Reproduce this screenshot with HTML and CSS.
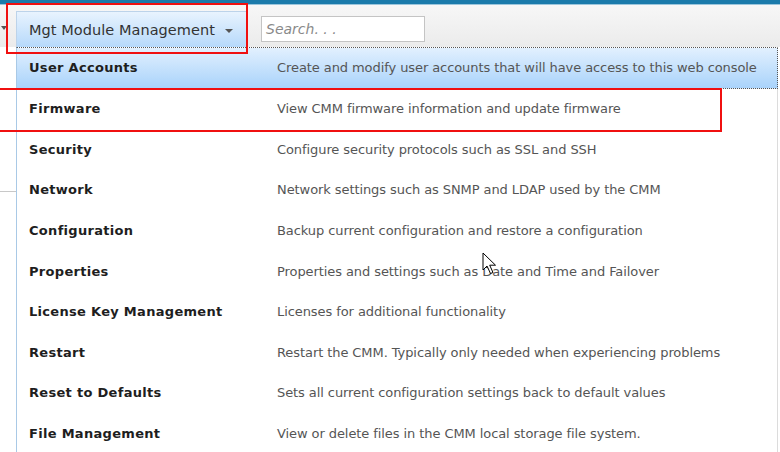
FILE: index.html
```html
<!DOCTYPE html>
<html>
<head>
<meta charset="utf-8">
<link rel="stylesheet" href="styles.css">
</head>
<body>
<div class="page">
  <div class="topbar"></div>
  <div class="toolbar">
    <span class="prev-arrow"></span>
    <div class="menu-btn">Mgt Module Management <span class="caret"></span></div>
    <div class="search">Search. . .</div>
  </div>
  <div class="main">
    <div class="left-strip"><div class="strip-line"></div></div>
    <div class="panel">
      <div class="row active"><span class="label">User Accounts</span><span class="desc">Create and modify user accounts that will have access to this web console</span></div>
      <div class="row"><span class="label">Firmware</span><span class="desc">View CMM firmware information and update firmware</span></div>
      <div class="row"><span class="label">Security</span><span class="desc">Configure security protocols such as SSL and SSH</span></div>
      <div class="row"><span class="label">Network</span><span class="desc">Network settings such as SNMP and LDAP used by the CMM</span></div>
      <div class="row"><span class="label">Configuration</span><span class="desc">Backup current configuration and restore a configuration</span></div>
      <div class="row"><span class="label">Properties</span><span class="desc">Properties and settings such as Date and Time and Failover</span></div>
      <div class="row"><span class="label">License Key Management</span><span class="desc">Licenses for additional functionality</span></div>
      <div class="row"><span class="label">Restart</span><span class="desc">Restart the CMM. Typically only needed when experiencing problems</span></div>
      <div class="row"><span class="label">Reset to Defaults</span><span class="desc">Sets all current configuration settings back to default values</span></div>
      <div class="row"><span class="label">File Management</span><span class="desc">View or delete files in the CMM local storage file system.</span></div>
    </div>
  </div>
  <div class="mark mark-menu"></div>
  <div class="mark mark-firmware"></div>
  <svg class="cursor" width="15" height="24" viewBox="0 0 15 24">
    <path d="M1 1 L1 18 L5 14 L8.5 21.5 L11 20.5 L7.7 13.2 L13.5 13.2 Z" fill="#fff" stroke="#000" stroke-width="1" stroke-linejoin="miter"/>
  </svg>
</div>
</body>
</html>
```
FILE: styles.css
```css
html, body {
  margin: 0;
  padding: 0;
  background: #fff;
}
.page {
  position: relative;
  width: 780px;
  height: 452px;
  overflow: hidden;
  font-family: "DejaVu Sans", sans-serif;
}
.topbar {
  height: 4px;
  background: #1b7bab;
  border-bottom: 1px solid #9cc6dc;
}
.toolbar {
  height: 42px;
  display: flex;
  align-items: flex-end;
  padding-left: 1px;
  background: linear-gradient(#f7f7f7, #ebebeb);
}
.prev-arrow {
  flex: none;
  width: 0;
  height: 0;
  border-left: 3px solid transparent;
  border-right: 3px solid transparent;
  border-top: 4px solid #555;
  margin: 0 9px 17px 0;
}
.menu-btn {
  flex: none;
  width: 232px;
  height: 36px;
  padding-left: 12px;
  display: flex;
  align-items: center;
  font-size: 14.5px;
  letter-spacing: 0.05px;
  color: #333;
  background: linear-gradient(#e8f3fe, #b6d9fb);
  border: 1px solid #bcd3ea;
  border-bottom: none;
  box-sizing: border-box;
  white-space: nowrap;
}
.caret {
  display: inline-block;
  width: 0;
  height: 0;
  border-left: 4px solid transparent;
  border-right: 4px solid transparent;
  border-top: 4px solid #555;
  margin-left: 10px;
  margin-top: 2px;
}
.search {
  flex: none;
  margin-left: 13px;
  margin-bottom: 5px;
  width: 164px;
  height: 26px;
  box-sizing: border-box;
  border: 1px solid #c4c4c4;
  background: #fff;
  font-style: italic;
  font-size: 14px;
  color: #8a8a8a;
  padding-left: 4px;
  display: flex;
  align-items: center;
}
.main {
  display: flex;
  height: 405px;
}
.left-strip {
  flex: none;
  width: 16px;
}
.strip-line {
  margin-top: 144px;
  height: 1px;
  background: #c8c8c8;
  width: 16px;
}
.panel {
  width: 762px;
  border-left: 1px solid #a9c9e6;
  border-right: 1px solid #dcdcdc;
  border-top: 1px dotted #555;
  box-sizing: border-box;
}
.row {
  height: 40.55px;
  display: flex;
  align-items: center;
  font-size: 13px;
  box-sizing: border-box;
  white-space: nowrap;
}
.row.active {
  background: linear-gradient(#e2f0fe, #a9d3fb);
  border-bottom: 1px dotted #555;
  margin-right: -1px;
  border-right: 1px dotted #555;
}
.label {
  width: 248px;
  padding-left: 12px;
  font-weight: bold;
  color: #1e1e1e;
  flex: none;
  letter-spacing: 0.3px;
}
.desc {
  color: #555;
  letter-spacing: -0.08px;
}
.mark {
  position: absolute;
  border: 2px solid #f01010;
  box-sizing: border-box;
}
.mark-menu {
  left: 6px;
  top: 3px;
  width: 242px;
  height: 51px;
}
.mark-firmware {
  left: -4px;
  top: 88px;
  width: 726px;
  height: 44px;
}
.cursor {
  position: absolute;
  left: 482px;
  top: 252px;
}
```
